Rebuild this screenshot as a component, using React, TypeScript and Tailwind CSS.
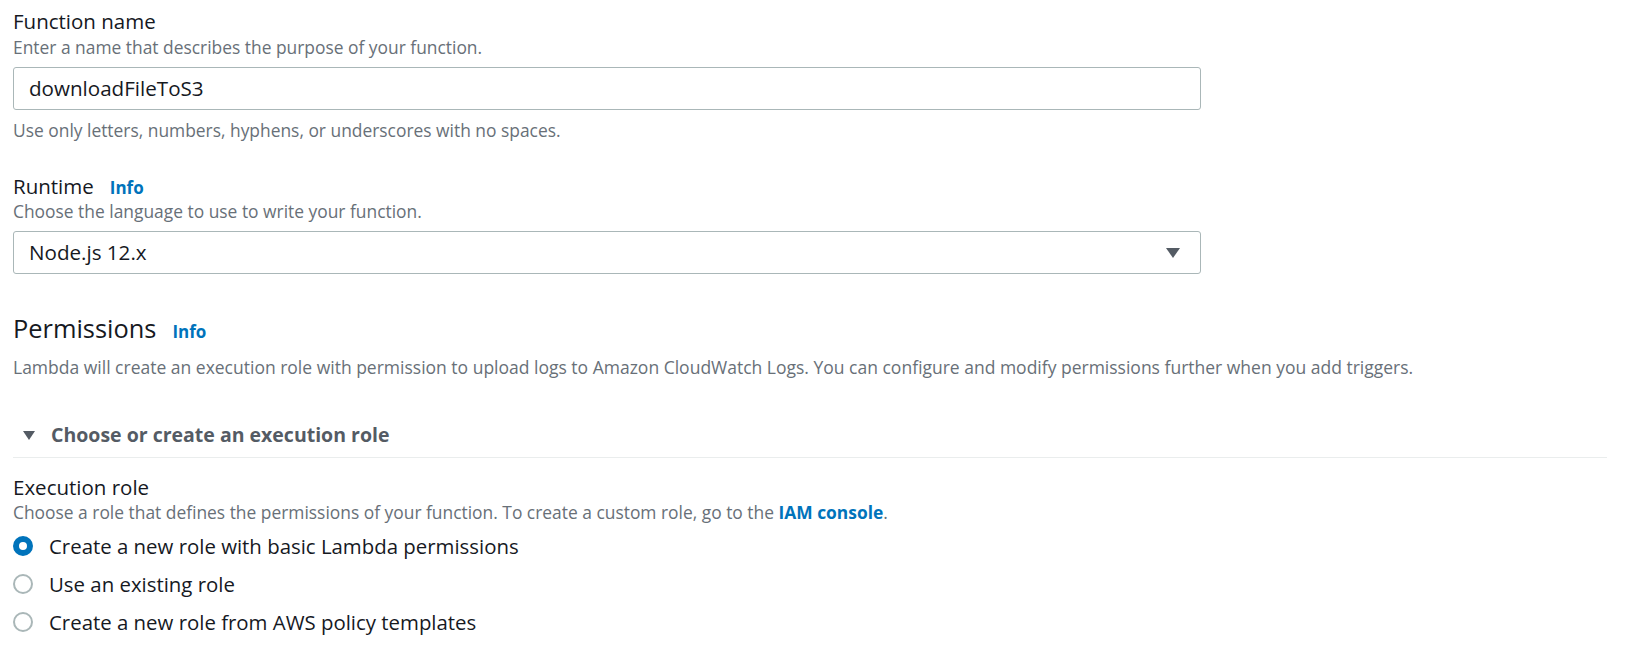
import { FC } from "react";

const font = { fontFamily: '"Open Sans", "Noto Sans", sans-serif' };

const Info: FC = () => (
  <span className="ml-[16px] text-[17px] font-bold leading-none text-[#0073bb] cursor-pointer">Info</span>
);

const Radio: FC<{ checked?: boolean; label: string }> = ({ checked, label }) => (
  <label className="flex h-[38px] items-center cursor-pointer">
    {checked ? (
      <span className="box-border h-[20px] w-[20px] rounded-full border-[6px] border-[#0073bb] bg-white" />
    ) : (
      <span className="box-border h-[20px] w-[20px] rounded-full border-2 border-[#aab7b8] bg-white" />
    )}
    <span className="ml-[16px] text-[20.4px] leading-[26px] text-[#16191f]">{label}</span>
  </label>
);

const App: FC = () => {
  return (
    <div className="min-h-[652px] w-[1629px] bg-white px-[13px] pt-[8px]" style={font}>
      {/* function name */}
      <div className="text-[20.5px] leading-[26px] text-[#16191f]">Function name</div>
      <div className="text-[17.4px] leading-[26px] text-[#687078]">
        Enter a name that describes the purpose of your function.
      </div>
      <div className="mt-[7px] flex h-[43px] w-[1188px] items-center rounded-[3px] border border-[#aab7b8] px-[15px] text-[20.6px] text-[#16191f]">
        downloadFileToS3
      </div>
      <div className="mt-[7px] text-[17.4px] leading-[26px] text-[#687078]">
        Use only letters, numbers, hyphens, or underscores with no spaces.
      </div>

      {/* runtime */}
      <div className="mt-[30px] flex h-[26px] items-baseline text-[20.5px] leading-[26px] text-[#16191f]">
        Runtime
        <Info />
      </div>
      <div className="-mt-px text-[17.4px] leading-[26px] text-[#687078]">
        Choose the language to use to write your function.
      </div>
      <div className="mt-[7px] flex h-[43px] w-[1188px] items-center justify-between rounded-[3px] border border-[#aab7b8] pl-[15px] pr-[20px] text-[20.6px] text-[#16191f]">
        <span>Node.js 12.x</span>
        <svg width="14" height="10" viewBox="0 0 14 10">
          <path d="M0 0h14L7 10z" fill="#545b64" />
        </svg>
      </div>

      {/* permissions */}
      <div className="mt-[39px] flex h-[30px] items-baseline leading-[30px]">
        <span className="text-[25.4px] text-[#16191f]">Permissions</span>
        <Info />
      </div>
      <div className="mt-[11px] text-[17.5px] leading-[26px] text-[#687078]">
        Lambda will create an execution role with permission to upload logs to Amazon CloudWatch Logs. You can
        configure and modify permissions further when you add triggers.
      </div>

      <div className="mt-[42px] w-[1594px] border-b border-[#eaeded] pb-[9px]">
        <div className="flex h-[26px] items-center">
          <svg className="ml-[10px]" width="12" height="9" viewBox="0 0 12 9">
            <path d="M0 0h12L6 9z" fill="#545b64" />
          </svg>
          <span className="ml-[16px] text-[19.5px] font-bold leading-[26px] text-[#545b64]">
            Choose or create an execution role
          </span>
        </div>
      </div>

      <div className="mt-[16px] text-[20.5px] leading-[26px] text-[#16191f]">Execution role</div>
      <div className="text-[17.4px] leading-[24px] text-[#687078]">
        Choose a role that defines the permissions of your function. To create a custom role, go to the{" "}
        <span className="font-bold text-[#0073bb]">IAM console</span>.
      </div>
      <div className="mt-[3px] flex flex-col">
        <Radio checked label="Create a new role with basic Lambda permissions" />
        <Radio label="Use an existing role" />
        <Radio label="Create a new role from AWS policy templates" />
      </div>
    </div>
  );
};

export default App;
